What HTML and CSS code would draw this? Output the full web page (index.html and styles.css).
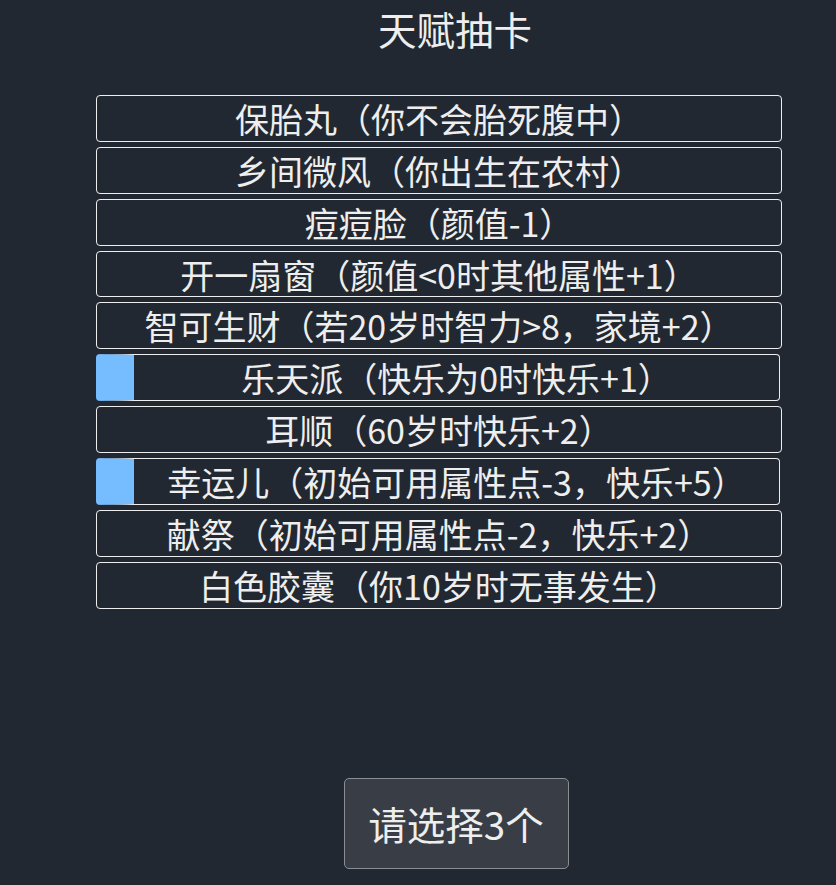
FILE: index.html
```html
<!DOCTYPE html>
<html lang="zh">
<head>
<meta charset="utf-8">
<title>天赋抽卡</title>
<link rel="stylesheet" href="styles.css">
</head>
<body>
<div class="page">
  <h1 class="title">天赋抽卡</h1>
  <ul class="talents">
    <li class="talent">保胎丸（你不会胎死腹中）</li>
    <li class="talent">乡间微风（你出生在农村）</li>
    <li class="talent">痘痘脸（颜值-1）</li>
    <li class="talent">开一扇窗（颜值&lt;0时其他属性+1）</li>
    <li class="talent">智可生财（若20岁时智力&gt;8，家境+2）</li>
    <li class="talent selected">乐天派（快乐为0时快乐+1）</li>
    <li class="talent">耳顺（60岁时快乐+2）</li>
    <li class="talent selected">幸运儿（初始可用属性点-3，快乐+5）</li>
    <li class="talent">献祭（初始可用属性点-2，快乐+2）</li>
    <li class="talent">白色胶囊（你10岁时无事发生）</li>
  </ul>
  <div class="actions">
    <button class="confirm">请选择3个</button>
  </div>
</div>
</body>
</html>
```
FILE: styles.css
```css
html, body {
  margin: 0;
  padding: 0;
  background: #222831;
  color: #eeeeee;
  font-family: "Microsoft YaHei", "Noto Sans CJK SC", "Noto Sans", sans-serif;
}

.page {
  height: 885px;
  box-sizing: border-box;
}

.title {
  margin: 0;
  padding: 0 0 0 74px;
  height: 95px;
  box-sizing: border-box;
  text-align: center;
  font-size: 38.5px;
  font-weight: normal;
  line-height: 56px;
}

.talents {
  list-style: none;
  margin: 0 0 0 96px;
  padding: 0;
  width: 686px;
  display: flex;
  flex-direction: column;
  gap: 5px;
}

.talent {
  box-sizing: border-box;
  height: 46.86px;
  border: 1px solid #eeeeee;
  border-radius: 4px;
  text-align: center;
  font-size: 34px;
  line-height: 46px;
  white-space: nowrap;
}

.talent.selected {
  width: 684px;
  border-left: 38px solid #76bdff;
}

.actions {
  margin-top: 169px;
  padding-left: 76px;
  text-align: center;
}

.confirm {
  width: 225px;
  height: 91px;
  background: #393e46;
  color: #eeeeee;
  border: 1px solid #8a8d92;
  border-radius: 5px;
  font-family: inherit;
  font-size: 38.5px;
  cursor: pointer;
}
```
